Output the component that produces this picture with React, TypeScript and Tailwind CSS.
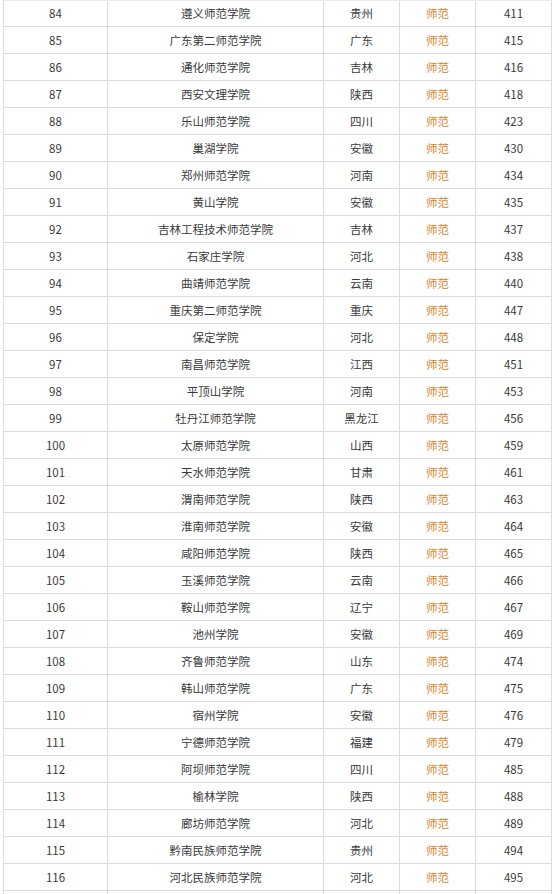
const rows: [number, string, string, number][] = [
  [84, '遵义师范学院', '贵州', 411],
  [85, '广东第二师范学院', '广东', 415],
  [86, '通化师范学院', '吉林', 416],
  [87, '西安文理学院', '陕西', 418],
  [88, '乐山师范学院', '四川', 423],
  [89, '巢湖学院', '安徽', 430],
  [90, '郑州师范学院', '河南', 434],
  [91, '黄山学院', '安徽', 435],
  [92, '吉林工程技术师范学院', '吉林', 437],
  [93, '石家庄学院', '河北', 438],
  [94, '曲靖师范学院', '云南', 440],
  [95, '重庆第二师范学院', '重庆', 447],
  [96, '保定学院', '河北', 448],
  [97, '南昌师范学院', '江西', 451],
  [98, '平顶山学院', '河南', 453],
  [99, '牡丹江师范学院', '黑龙江', 456],
  [100, '太原师范学院', '山西', 459],
  [101, '天水师范学院', '甘肃', 461],
  [102, '渭南师范学院', '陕西', 463],
  [103, '淮南师范学院', '安徽', 464],
  [104, '咸阳师范学院', '陕西', 465],
  [105, '玉溪师范学院', '云南', 466],
  [106, '鞍山师范学院', '辽宁', 467],
  [107, '池州学院', '安徽', 469],
  [108, '齐鲁师范学院', '山东', 474],
  [109, '韩山师范学院', '广东', 475],
  [110, '宿州学院', '安徽', 476],
  [111, '宁德师范学院', '福建', 479],
  [112, '阿坝师范学院', '四川', 485],
  [113, '榆林学院', '陕西', 488],
  [114, '廊坊师范学院', '河北', 489],
  [115, '黔南民族师范学院', '贵州', 494],
  [116, '河北民族师范学院', '河北', 495],
  [117, '', '', 0],
];

const cell = 'h-[27px] pt-px flex items-center justify-center border-r border-b border-[#dcdcdc]';
const firstCell = 'h-[26px] flex items-center justify-center border-r border-b border-[#dcdcdc]';

export default function App() {
  return (
    <div className="w-[556px] h-[894px] overflow-hidden bg-white">
      <div
        className="ml-[3px] w-[549px] border-l border-t border-l-[#dcdcdc] border-t-[#ececec] text-[11.5px] text-[#3a3a3a]"
        style={{ fontFamily: '"Noto Sans CJK SC", "Noto Sans", sans-serif' }}
      >
        {rows.map(([rank, name, prov, score], i) => {
          const c = i === 0 ? firstCell : cell;
          return (
            <div key={rank} className="grid grid-cols-[104px_216px_76px_76px_76px]">
              <div className={c}>{name ? rank : ''}</div>
              <div className={c}>{name}</div>
              <div className={c}>{prov}</div>
              <div className={`${c} text-[#dd8128]`}>{name ? '师范' : ''}</div>
              <div className={c}>{name ? score : ''}</div>
            </div>
          );
        })}
      </div>
    </div>
  );
}
